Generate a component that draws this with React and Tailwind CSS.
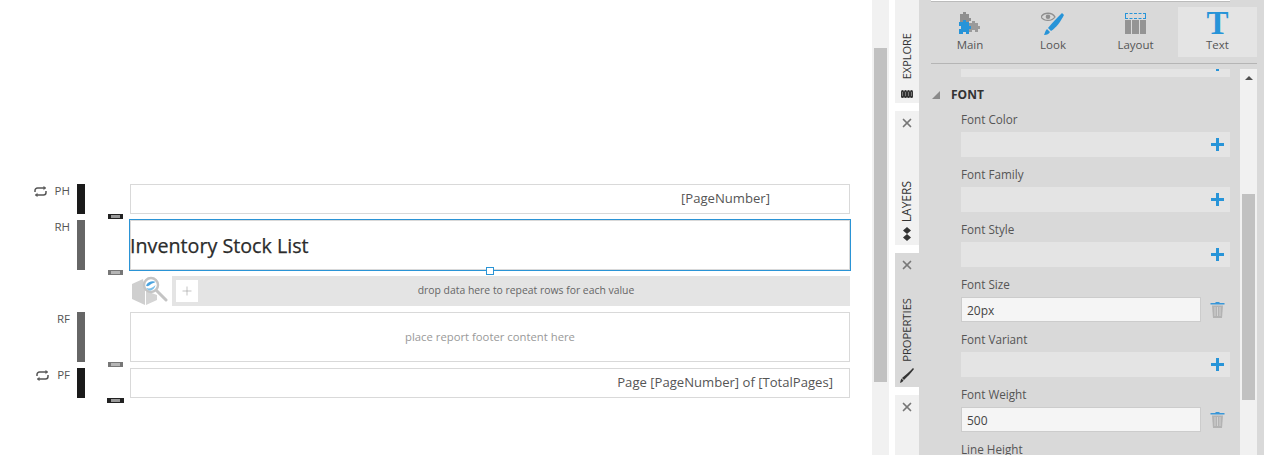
import React from "react";
import { X, Plus } from "lucide-react";

const font = "font-['Open_Sans','Noto_Sans',sans-serif]";

function RepeatIcon() {
  return (
    <svg width="13" height="11" viewBox="0 0 13 11" fill="none" stroke="#555" strokeWidth="1.500">
      <path d="M1 6V4.500a2.500 2.500 0 0 1 2.500-2.500H10" />
      <path d="M12 5v1.500a2.500 2.500 0 0 1-2.500 2.500H3" />
      <path d="M9.500 .3L12 2 9.500 3.700" fill="#555" strokeWidth="0.5" />
      <path d="M3.500 7.300L1 9 3.500 10.700" fill="#555" strokeWidth="0.5" />
    </svg>
  );
}

function BluePlus() {
  return (
    <svg width="13" height="13" viewBox="0 0 13 13">
      <path d="M5 0h3v5h5v3H8v5H5V8H0V5h5z" fill="#2794d8" />
    </svg>
  );
}

function Handle({ dark, wide }) {
  return (
    <div
      className={`absolute flex items-center justify-center ${wide ? "left-[107px] w-[17px]" : "left-[108px] w-[15px]"} -bottom-[5px] h-[5px] ${dark ? "bg-[#222222]" : "bg-[#777777]"}`}
    >
      <div className={`w-[9px] h-[3px] ${dark ? "bg-[#999999]" : "bg-[#b5b5b5]"}`} />
    </div>
  );
}

function ReportRow({ label, repeat, dark, height, handle, wide, children }) {
  return (
    <div className="relative flex" style={{ height }}>
      <div className="w-[70px] flex justify-end gap-[8px] text-[11.500px] leading-[14px] text-[#555555]">
        {repeat && (
          <span className="mt-[2px]">
            <RepeatIcon />
          </span>
        )}
        <span>{label}</span>
      </div>
      <div className={`ml-[7px] w-[8px] ${label ? (dark ? "bg-[#1a1a1a]" : "bg-[#666666]") : ""}`} />
      <div className="ml-[45px] w-[720px]">{children}</div>
      {handle && <Handle dark={handle === "dark"} wide={wide} />}
    </div>
  );
}

function CubeSearchIcon() {
  return (
    <svg width="37" height="30" viewBox="0 0 37 30">
      <path d="M1 8L12 3 14 14 14 29 1 23Z" fill="#cfcfcf" />
      <path d="M15 15L26 19 26 24 15 29Z" fill="#d4d4d4" />
      <circle cx="20" cy="9" r="7" fill="#fff" stroke="#c4c4c4" strokeWidth="2.5" />
      <path d="M15 9.500c2-4 7-5 9.500-3.500-1 1-3 1-5 2.500s-3 2.500-4.500 1z" fill="#4aa3df" />
      <path d="M15.500 12c3 1 6 0 9-3-.5 3-3 5.500-5.500 5.500-1.500 0-3-1-3.500-2.500z" fill="#7cc0ea" />
      <path d="M25.500 14.500L35 24" stroke="#c4c4c4" strokeWidth="3" strokeLinecap="round" />
    </svg>
  );
}

function PuzzleIcon() {
  return (
    <svg width="24" height="24" viewBox="0 0 24 24">
      <path d="M2 2h3V0h3v2h3v4h2v3h-2v3H8V9H5v3H2z" fill="#8f8f8f" />
      <path d="M11 11h3V9h3v2h3v3h2v3h-2v3h-3v-2h-3v2h-3v-3z" fill="#9a9a9a" />
      <path d="M1 10h4V8h3v2h3v4h2v3h-2v5H8v-2H5v2H1v-5h2v-3H1z" fill="#2794d8" />
    </svg>
  );
}

function LookIcon() {
  return (
    <svg width="24" height="24" viewBox="0 0 24 24">
      <path d="M0 5c3-5 11-5 14 0-3 4.500-11 4.500-14 0z" fill="none" stroke="#8f8f8f" strokeWidth="1.300" />
      <circle cx="7" cy="4.700" r="2.300" fill="#8f8f8f" />
      <path d="M21 1l2 2C20 9 15 16 10 19l-3-3C11 11 16 6 21 1z" fill="#2794d8" />
      <path d="M6 17l3 3c-1 2-3 3-6 3 1-2 1-4 3-6z" fill="#2794d8" />
    </svg>
  );
}

function LayoutIcon() {
  return (
    <div className="w-[21px] flex flex-col gap-[1px]">
      <div className="h-[6px] border border-dashed border-[#2794d8]" />
      <div className="flex gap-[1px] h-[14px]">
        <div className="flex-1 bg-[#949494]" />
        <div className="flex-1 bg-[#949494]" />
        <div className="flex-1 bg-[#949494]" />
      </div>
    </div>
  );
}

function ToolTab({ label, className, children }) {
  return (
    <div className={`h-[50px] flex flex-col items-center ${className}`}>
      <div className="h-[27px] pt-[6px] flex items-center justify-center">{children}</div>
      <span className="mt-[4px] text-[11.500px] leading-[14px] text-[#555555]">{label}</span>
    </div>
  );
}

function TrashIcon() {
  return (
    <svg width="15" height="17" viewBox="0 0 15 17">
      <path d="M5.500 1h4v1h5v1.500H.5V2h5z" fill="#3a97d8" />
      <path d="M2 4.500h11L12 17H3z" fill="#b3b3b3" />
      <path d="M5 6v9M7.500 6v9M10 6v9" stroke="#d9d9d9" strokeWidth="0.8" />
    </svg>
  );
}

function Field({ label, value }) {
  return (
    <div className="h-[55px] pl-[30px]">
      <div className="h-[21px] text-[11.700px] leading-[16px] text-[#555555]">{label}</div>
      {value ? (
        <div className="flex items-center">
          <div className="w-[240px] h-[25px] px-[5px] bg-[#f5f5f5] border border-[#cccccc] text-xs leading-[25px] text-[#444444]">
            {value}
          </div>
          <div className="ml-[9px]">
            <TrashIcon />
          </div>
        </div>
      ) : (
        <div className="w-[269px] h-[25px] bg-[#e4e4e4] flex items-center justify-end pr-[6px]">
          <BluePlus />
        </div>
      )}
    </div>
  );
}

function SideTab({ label, icon, close, active, height, labelClass, iconClass, wrapClass }) {
  return (
    <div
      className={`flex flex-col items-center ${close ? "" : "justify-end"} ${active ? "bg-[#d9d9d9]" : "bg-[#f1f1f1]"}`}
      style={{ height }}
    >
      {close && (
        <div className="pt-[5px]">
          <X size={14} strokeWidth={3} color="#777777" />
        </div>
      )}
      {label && (
        <div className={`flex flex-col items-center ${close ? "mt-auto" : ""} ${wrapClass}`}>
          <span className={`[writing-mode:vertical-rl] rotate-180 leading-[14px] text-[#333333] ${labelClass}`}>{label}</span>
          <div className={`h-[18px] flex items-center ${iconClass}`}>{icon}</div>
        </div>
      )}
    </div>
  );
}

export default function App() {
  return (
    <div className={`flex w-[1264px] h-[455px] overflow-hidden bg-white ${font}`}>
      <div className="w-[872px] pt-[184px] flex flex-col gap-[6px]">
        <ReportRow label="PH" repeat dark height={30} handle="dark">
          <div className="h-full border border-[#d9d9d9] flex items-center justify-end pr-[79px] text-[13.100px] text-[#555555]">
            [PageNumber]
          </div>
        </ReportRow>
        <ReportRow label="RH" height={50} handle="gray">
          <div className="relative h-full pt-[2px] border border-[#d9d9d9] outline outline-1 outline-[#2a94d6] flex items-center text-[19.700px] font-medium text-[#2b2b2b] indent-[-1px] [-webkit-text-stroke:0.25px_#2b2b2b]">
            Inventory Stock List
            <div className="absolute left-[355px] -bottom-[6px] w-[8px] h-[8px] bg-white border border-[#2a94d6]" />
          </div>
        </ReportRow>
        <ReportRow height={30}>
          <div className="h-full flex items-center">
            <div className="ml-[1px] w-[37px]">
              <CubeSearchIcon />
            </div>
            <div className="ml-[4px] flex-1 h-full bg-[#e4e4e4] flex items-center pl-[4px]">
              <div className="w-[22px] h-[22px] bg-white flex items-center justify-center">
                <Plus size={14} strokeWidth={1} color="#999999" />
              </div>
              <div className="flex-1 pl-[4px] text-center text-[10.400px] text-[#666666]">
                drop data here to repeat rows for each value
              </div>
            </div>
          </div>
        </ReportRow>
        <ReportRow label="RF" height={50} handle="gray">
          <div className="h-full border border-[#d9d9d9] flex items-center justify-center text-[11.300px] text-[#999999]">
            place report footer content here
          </div>
        </ReportRow>
        <ReportRow label="PF" repeat dark height={30} handle="dark" wide>
          <div className="h-full border border-[#d9d9d9] flex items-center justify-end pr-[16px] text-[13.100px] text-[#555555]">
            Page [PageNumber] of [TotalPages]
          </div>
        </ReportRow>
      </div>

      <div className="w-[17px] h-full bg-[#f1f1f1] pt-[48px] px-[2px]">
        <div className="h-[334px] bg-[#c1c1c1]" />
      </div>

      <div className="ml-[6px] w-[24px] h-full flex flex-col gap-[8px]">
        <SideTab
          height={103}
          label="EXPLORE"
          labelClass="text-[11px]"
          iconClass="mt-[6px]"
          icon={
            <svg width="12" height="8" viewBox="0 0 12 8">
              <rect x="0" y="0" width="3" height="8" rx="1.500" fill="#333333" />
              <rect x="3" y="0" width="3" height="8" rx="1.500" fill="#333333" />
              <rect x="6" y="0" width="3" height="8" rx="1.500" fill="#333333" />
              <rect x="9" y="0" width="3" height="8" rx="1.500" fill="#333333" />
              <path d="M1.500 2v4M4.500 2v4M7.500 2v4M10.500 2v4" stroke="#999999" strokeWidth="0.7" />
            </svg>
          }
        />
        <SideTab
          height={134}
          close
          label="LAYERS"
          labelClass="text-xs"
          iconClass="mt-[3px]"
          wrapClass="pb-[2px]"
          icon={
            <svg width="10" height="14" viewBox="0 0 10 14">
              <path d="M5 0l4 3.500-4 3.500-4-3.500z" fill="#333333" />
              <path d="M5 14l4-3.500-4-3.500-4 3.500z" fill="#333333" />
            </svg>
          }
        />
        <SideTab
          height={134}
          close
          active
          label="PROPERTIES"
          labelClass="text-[11.200px]"
          iconClass="mt-[4px]"
          wrapClass="pb-[3px]"
          icon={
            <svg width="14" height="15" viewBox="0 0 14 15">
              <path d="M13 0l1 1C11 5 7 9 4 12l-2-2C6 7 10 3 13 0z" fill="#333333" />
              <path d="M1.500 10.500l2 2c-.5 1-2 2-3.500 2.500.5-1.500.5-3 1.500-4.500z" fill="#333333" />
            </svg>
          }
        />
        <SideTab height={60} close />
      </div>

      <div className="flex-1 h-full bg-[#d9d9d9]">
        <div className="ml-[12px] w-[299px] h-[2px] bg-white border-b border-[#bbbbbb]" />
        <div className="ml-[12px] mt-[5px] w-[326px] h-[50px] flex">
          <ToolTab label="Main" className="w-[78px]">
            <PuzzleIcon />
          </ToolTab>
          <ToolTab label="Look" className="w-[88px]">
            <LookIcon />
          </ToolTab>
          <ToolTab label="Layout" className="w-[77px]">
            <LayoutIcon />
          </ToolTab>
          <ToolTab label="Text" className="ml-[4px] w-[79px] bg-[#e4e4e4]">
            <span className="font-['Liberation_Serif',serif] font-bold text-[33px] leading-[21px] text-[#2794d8]">T</span>
          </ToolTab>
        </div>
        <div className="ml-[12px] mt-[6px] w-[326px] h-px bg-[#b5b5b5]" />

        <div className="flex mt-[5px] ml-[12px] h-[386px]">
          <div className="w-[309px] h-full overflow-hidden">
            <div className="ml-[30px] w-[269px] h-[8px] bg-[#e4e4e4] relative">
              <div className="absolute right-[11px] top-0 w-[3px] h-[2px] bg-[#2794d8]" />
            </div>
            <div className="h-[34px] flex items-center pt-[2px]">
              <div className="w-0 h-0 ml-[1px] border-l-[8px] border-l-transparent border-b-[8px] border-b-[#8a8a8a]" />
              <span className="ml-[11px] text-xs font-bold text-[#333333]">FONT</span>
            </div>
            <Field label="Font Color" />
            <Field label="Font Family" />
            <Field label="Font Style" />
            <Field label="Font Size" value="20px" />
            <Field label="Font Variant" />
            <Field label="Font Weight" value="500" />
            <Field label="Line Height" />
          </div>
          <div className="w-[17px] h-full bg-[#f1f1f1] relative">
            <div className="w-full h-[17px] flex items-center justify-center">
              <div className="w-0 h-0 border-x-[4px] border-x-transparent border-b-[4px] border-b-[#505050]" />
            </div>
            <div className="absolute left-[2px] top-[125px] w-[13px] h-[206px] bg-[#c1c1c1]" />
          </div>
        </div>
      </div>
    </div>
  );
}
